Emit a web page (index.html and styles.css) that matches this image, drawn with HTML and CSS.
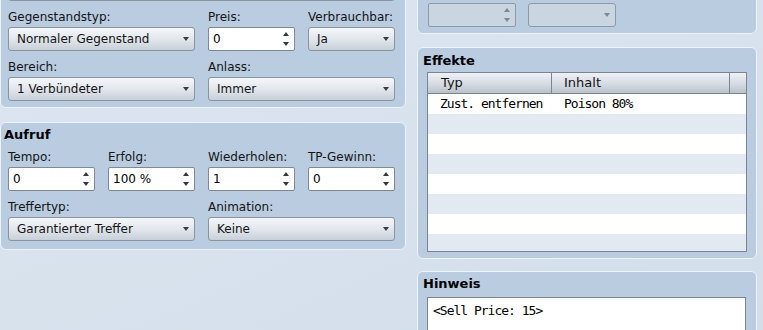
FILE: index.html
```html
<!DOCTYPE html>
<html lang="de">
<head>
    <meta charset="UTF-8">
    <title>Gegenstand</title>
    <link rel="stylesheet" href="styles.css">
</head>
<body>
    <div class="page">
        <div class="column">
            <div class="panel general">
                <div class="grid">
                    <div class="select wide"><span></span></div>

                    <div class="field span-2">
                        <label>Gegenstandstyp:</label>
                        <div class="select"><span>Normaler Gegenstand</span></div>
                    </div>
                    <div class="field">
                        <label>Preis:</label>
                        <div class="spin"><span>0</span><i class="arrows"></i></div>
                    </div>
                    <div class="field">
                        <label>Verbrauchbar:</label>
                        <div class="select"><span>Ja</span></div>
                    </div>

                    <div class="field span-2">
                        <label>Bereich:</label>
                        <div class="select"><span>1 Verbündeter</span></div>
                    </div>
                    <div class="field span-2">
                        <label>Anlass:</label>
                        <div class="select"><span>Immer</span></div>
                    </div>
                </div>
            </div>

            <div class="panel invocation">
                <h2>Aufruf</h2>
                <div class="grid">
                    <div class="field">
                        <label>Tempo:</label>
                        <div class="spin"><span>0</span><i class="arrows"></i></div>
                    </div>
                    <div class="field">
                        <label>Erfolg:</label>
                        <div class="spin"><span>100 %</span><i class="arrows"></i></div>
                    </div>
                    <div class="field">
                        <label>Wiederholen:</label>
                        <div class="spin"><span>1</span><i class="arrows"></i></div>
                    </div>
                    <div class="field">
                        <label>TP-Gewinn:</label>
                        <div class="spin"><span>0</span><i class="arrows"></i></div>
                    </div>

                    <div class="field span-2">
                        <label>Treffertyp:</label>
                        <div class="select"><span>Garantierter Treffer</span></div>
                    </div>
                    <div class="field span-2">
                        <label>Animation:</label>
                        <div class="select"><span>Keine</span></div>
                    </div>
                </div>
            </div>
        </div>

        <div class="column">
            <div class="panel damage">
                <div class="row">
                    <div class="spin disabled"><span></span><i class="arrows"></i></div>
                    <div class="select disabled"><span></span></div>
                </div>
            </div>

            <div class="panel effects">
                <h2>Effekte</h2>
                <div class="table">
                    <div class="thead">
                        <div class="th">Typ</div>
                        <div class="th">Inhalt</div>
                        <div class="th"></div>
                    </div>
                    <div class="tbody">
                        <div class="tr"><div class="td">Zust. entfernen</div><div class="td">Poison 80%</div></div>
                        <div class="tr"></div>
                        <div class="tr"></div>
                        <div class="tr"></div>
                        <div class="tr"></div>
                        <div class="tr"></div>
                        <div class="tr"></div>
                        <div class="tr"></div>
                    </div>
                </div>
            </div>

            <div class="panel note">
                <h2>Hinweis</h2>
                <div class="textarea">&lt;Sell Price: 15&gt;</div>
            </div>
        </div>
    </div>
</body>
</html>
```

FILE: styles.css
```css
body {
    margin: 0;
    height: 330px;
    overflow: hidden;
    background: linear-gradient(to bottom right, #dce6f0, #d2deea);
    font-family: "DejaVu Sans", sans-serif;
    font-size: 12px;
    color: #141414;
}

.page {
    display: grid;
    grid-template-columns: 406px 340px;
    column-gap: 11px;
    align-items: start;
}

.column {
    display: flex;
    flex-direction: column;
}

.panel {
    box-sizing: border-box;
    background-color: #b9cce0;
    border: 1px solid #edf3f9;
    border-radius: 6px;
}

.panel h2 {
    margin: 0;
    font-size: 13px;
    line-height: 16px;
    font-weight: bold;
    color: #000;
}

.grid {
    display: grid;
    grid-template-columns: repeat(4, 87px);
    column-gap: 13px;
    row-gap: 9px;
}

.span-2 {
    grid-column: span 2;
}

.wide {
    grid-column: span 4;
}

.field {
    display: flex;
    flex-direction: column;
    gap: 2px;
}

.field label {
    line-height: 15px;
    white-space: nowrap;
}

/* left column */
.general {
    margin-top: -30px;
    padding: 6px 10px 6px 7px;
}

.invocation {
    margin-top: 14px;
    padding: 4px 10px 8px 7px;
}

.invocation h2 {
    margin: 0 0 7px -4px;
}

/* controls */
.select,
.spin {
    box-sizing: border-box;
    height: 24px;
    display: flex;
    align-items: center;
    justify-content: space-between;
    line-height: 15px;
    white-space: nowrap;
}

.select {
    padding: 0 5px 0 8px;
    border: 1px solid #8a949e;
    border-radius: 3px;
    background: linear-gradient(#f5f7fa, #e0e5eb 55%, #c8cfd7);
}

.select::after {
    content: "";
    border-left: 3.5px solid transparent;
    border-right: 3.5px solid transparent;
    border-top: 4px solid #383d43;
}

.spin {
    padding: 0 5px 0 4px;
    border: 1px solid #7f8994;
    border-radius: 2px;
    background-color: white;
    color: #000;
}

.arrows {
    display: flex;
    flex-direction: column;
    gap: 6px;
}

.arrows::before,
.arrows::after {
    content: "";
    border-left: 3px solid transparent;
    border-right: 3px solid transparent;
}

.arrows::before {
    border-bottom: 4px solid #33383d;
}

.arrows::after {
    border-top: 4px solid #33383d;
}

.select.disabled,
.spin.disabled {
    width: 88px;
    background: #c9d5e1;
    border-color: #8e99a5;
}

.select.disabled::after {
    border-top-color: #7d8792;
}

.spin.disabled .arrows::before {
    border-bottom-color: #7d8792;
}

.spin.disabled .arrows::after {
    border-top-color: #7d8792;
}

/* right column */
.damage {
    margin-top: -30px;
    padding: 32px 10px 6px 10px;
}

.row {
    display: flex;
    gap: 12px;
}

.effects {
    margin-top: 13px;
    padding: 5px 9px 6px 9px;
}

.effects h2,
.note h2 {
    margin: 0 0 3px -4px;
}

.table {
    box-sizing: border-box;
    width: 320px;
    border: 1px solid #7b8590;
    background-color: white;
}

.thead,
.tr {
    display: grid;
    grid-template-columns: 124px 178px 1fr;
}

.thead {
    height: 20px;
    border-bottom: 1px solid #7b8590;
    background: linear-gradient(#eef2f6, #d3d9e0 60%, #b9c1ca);
    font-size: 13px;
    line-height: 19px;
}

.th {
    padding-left: 13px;
    border-right: 1px solid #7b8590;
}

.th:nth-child(2) {
    padding-left: 12px;
}

.th:last-child {
    border-right: none;
}

.tbody {
    height: 157px;
    overflow: hidden;
}

.tr {
    height: 20px;
}

.tr:nth-child(even) {
    background-color: #e3e9f1;
}

.td,
.textarea {
    font-family: "DejaVu Sans Mono", monospace;
    font-size: 13px;
    letter-spacing: -1px;
    color: #000;
    white-space: nowrap;
}

.td {
    padding-left: 12px;
    line-height: 20px;
}

.note {
    margin-top: 12px;
    padding: 4px 9px 6px 9px;
}

.note h2 {
    margin-bottom: 5px;
}

.textarea {
    box-sizing: border-box;
    width: 319px;
    height: 60px;
    padding: 5px 5px;
    border: 1px solid #7b8590;
    background-color: white;
    line-height: 16px;
}
```
